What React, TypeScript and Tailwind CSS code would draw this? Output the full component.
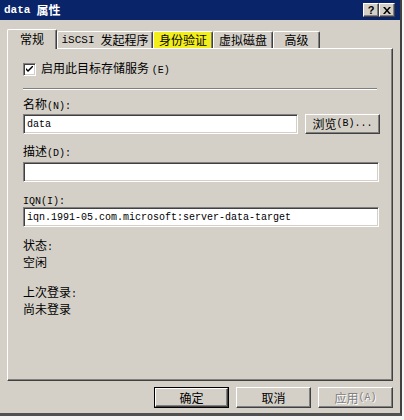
import React from "react";

const cjk = "font-['Noto_Sans_CJK_SC',sans-serif]";
const sunken =
  "bg-white border border-t-[#808080] border-l-[#808080] border-b-white border-r-white shadow-[inset_1px_1px_0_#404040,inset_-1px_-1px_0_#d4d0c8]";
const raised =
  "bg-[#d4d0c8] border border-t-white border-l-white border-b-[#404040] border-r-[#404040] shadow-[inset_-1px_-1px_0_#808080]";

const M = ({ children }: { children: React.ReactNode }) => (
  <span className="font-['Liberation_Mono',monospace] text-[10px]">{children}</span>
);

const Label = ({ children, className = "" }: { children: React.ReactNode; className?: string }) => (
  <div className={`h-[14px] leading-[14px] text-[12px] text-black ${className}`}>{children}</div>
);

const Line = ({ children, className = "" }: { children: React.ReactNode; className?: string }) => (
  <div className={`h-[17px] leading-[17px] text-[12px] text-black ${className}`}>{children}</div>
);

const Tab = ({
  children,
  w,
  active,
  mark,
}: {
  children: React.ReactNode;
  w: string;
  active?: boolean;
  mark?: boolean;
}) => (
  <div
    className={`${w} flex items-center justify-center text-[12px] leading-[12px] border-t border-l border-t-white border-l-white border-r border-r-[#404040] shadow-[inset_-1px_0_0_#808080] rounded-t-[2px] ${
      active
        ? "h-[20px] bg-[#d4d0c8] relative z-10 -mb-[1px] pb-[1px]"
        : mark
        ? "h-[17px] bg-[#f2ee1c] shadow-[0_0_3px_1px_rgba(190,190,0,0.7)]"
        : "h-[17px] bg-[#d4d0c8]"
    }`}
  >
    {children}
  </div>
);

const Btn = ({
  children,
  def,
  disabled,
}: {
  children: React.ReactNode;
  def?: boolean;
  disabled?: boolean;
}) =>
  def ? (
    <div className="w-[75px] h-[21px] border border-black flex">
      <div className={`${raised} flex-1 flex items-center justify-center text-[12px] leading-[12px]`}>
        {children}
      </div>
    </div>
  ) : (
    <div
      className={`${raised} w-[75px] h-[21px] flex items-center justify-center text-[12px] leading-[12px] ${
        disabled ? "text-[#808080] [text-shadow:1px_1px_0_#fff]" : ""
      }`}
    >
      {children}
    </div>
  );

export default function App() {
  return (
    <div className={`w-[404px] h-[420px] bg-[#f4f4f4] ${cjk} text-black`}>
      <div className="w-[402px] h-[416px] bg-[#d4d0c8] border-r-[2px] border-r-[#404040] border-b-[3px] border-b-[#505050] flex flex-col">
        {/* title bar */}
        <div className="h-[20px] bg-[#0a246a] flex items-center justify-between pl-[4px] pr-[5px]">
          <div className="flex items-center text-white font-bold text-[12px] leading-[12px]">
            <span className="font-['Liberation_Mono',monospace] text-[11px] font-bold mr-[6px]">data</span>
            <span>属性</span>
          </div>
          <div className="flex">
            <div className={`${raised} w-[16px] h-[14px] flex items-center justify-center text-[11px] font-bold leading-none font-['Liberation_Sans',sans-serif]`}>
              ?
            </div>
            <div className={`${raised} w-[16px] h-[14px] flex items-center justify-center`}>
              <svg width="8" height="7" viewBox="0 0 8 7">
                <path d="M0 0h2l2 2.5L6 0h2L5 3.5 8 7H6L4 4.5 2 7H0l3-3.5z" fill="#000" />
              </svg>
            </div>
          </div>
        </div>

        {/* tabs */}
        <div className="px-[7px] pt-[8px] flex-1 flex flex-col">
          <div className="flex items-end h-[20px]">
            <Tab w="w-[50px]" active>
              常规
            </Tab>
            <Tab w="w-[96px]">
              <span className="font-['Liberation_Mono',monospace] text-[11px] mr-[6px]">iSCSI</span>发起程序
            </Tab>
            <Tab w="w-[60px]" mark>
              身份验证
            </Tab>
            <Tab w="w-[60px]">虚拟磁盘</Tab>
            <Tab w="w-[47px]">高级</Tab>
          </div>

          {/* panel */}
          <div className="w-[386px] h-[333px] border border-t-white border-l-white border-b-[#404040] border-r-[#404040] shadow-[inset_-1px_-1px_0_#808080] pl-[15px] flex flex-col">
            <div className="mt-[14px] flex items-center h-[13px]">
              <div className={`${sunken} w-[13px] h-[13px] flex items-center justify-center`}>
                <svg width="7" height="7" viewBox="0 0 7 7">
                  <path d="M0 2v2l2 2 5-5V-1L2 4z" fill="#000" />
                </svg>
              </div>
              <span className="ml-[5px] text-[12px] leading-[12px]">
                启用此目标存储服务 <M>(E)</M>
              </span>
            </div>

            <div className="mt-[12px] w-[354px] h-[2px] border-t border-t-[#808080] border-b border-b-white" />

            <Label className="mt-[7px]">
              名称<M>(N):</M>
            </Label>
            <div className="mt-[3px] flex gap-[7px] h-[20px]">
              <div className={`${sunken} w-[275px] h-[20px] flex items-center pl-[3px]`}>
                <span className="font-['Liberation_Mono',monospace] text-[10px]">data</span>
              </div>
              <div className={`${raised} w-[75px] h-[20px] flex items-center justify-center text-[12px] leading-[12px]`}>
                浏览<M>(B)...</M>
              </div>
            </div>

            <Label className="mt-[10px]">
              描述<M>(D):</M>
            </Label>
            <div className={`${sunken} mt-[4px] w-[356px] h-[20px]`} />

            <Label className="mt-[10px]">
              <M>IQN(I):</M>
            </Label>
            <div className={`${sunken} mt-[1px] w-[356px] h-[20px] flex items-center pl-[3px]`}>
              <span className="font-['Liberation_Mono',monospace] text-[10px]">
                iqn.1991-05.com.microsoft:server-data-target
              </span>
            </div>

            <Line className="mt-[9px]">
              状态<M>:</M>
            </Line>
            <Line>空闲</Line>
            <Line className="mt-[13px]">
              上次登录<M>:</M>
            </Line>
            <Line>尚未登录</Line>
          </div>

          {/* buttons */}
          <div className="mt-[6px] flex justify-end gap-[7px] w-[386px]">
            <Btn def>确定</Btn>
            <Btn>取消</Btn>
            <Btn disabled>
              应用<M>(A)</M>
            </Btn>
          </div>
        </div>
      </div>
    </div>
  );
}
